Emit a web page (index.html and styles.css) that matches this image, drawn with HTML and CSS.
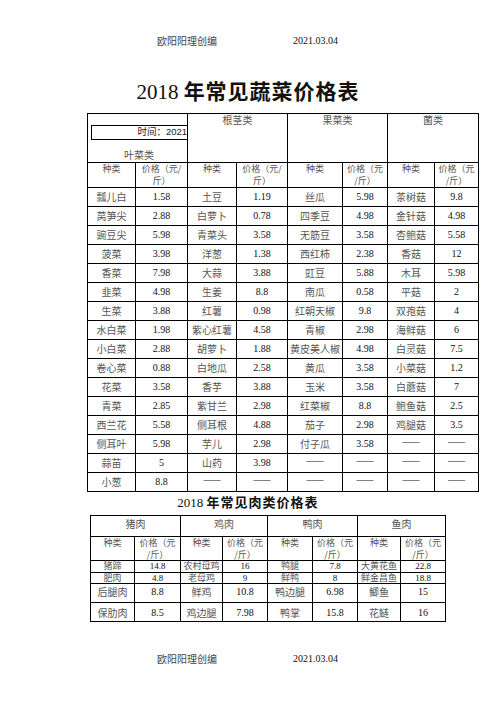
FILE: index.html
```html
<!DOCTYPE html>
<html lang="zh">
<head>
<meta charset="utf-8">
<title>2018年常见蔬菜价格表</title>
<link rel="stylesheet" href="styles.css">
</head>
<body>
<div class="page">
  <div class="runhead top"><span class="rh-cn">欧阳阳理创编</span><span>2021.03.04</span></div>

  <h1 class="title"><span class="num">2018 </span><span class="brush">年常见蔬菜价格表</span></h1>

  <table class="veg">
    <colgroup>
      <col class="c48"><col class="c52"><col class="c49"><col class="c51"><col class="c55"><col class="c45"><col class="c47"><col class="c44">
    </colgroup>
    <tr class="grp">
      <td colspan="2" class="corner-cell">
        <div class="corner">
          <div class="timebox">时间：2021</div>
          <div class="n">叶菜类</div>
        </div>
      </td>
      <td colspan="2" class="n gh">根茎类</td>
      <td colspan="2" class="n gh">果菜类</td>
      <td colspan="2" class="n gh">菌类</td>
    </tr>
    <tr class="hdr">
      <td class="n">种类</td><td class="n">价格（元/<br>斤）</td>
      <td class="n">种类</td><td class="n">价格（元/<br>斤）</td>
      <td class="n">种类</td><td class="n">价格（元<br>/斤）</td>
      <td class="n">种类</td><td class="n">价格（元<br>/斤）</td>
    </tr>
    <tr class="row"><td class="n">瓢儿白</td><td class="p">1.58</td><td class="n">土豆</td><td class="p">1.19</td><td class="n">丝瓜</td><td class="p">5.98</td><td class="n">茶树菇</td><td class="p">9.8</td></tr>
    <tr class="row"><td class="n">莴笋尖</td><td class="p">2.88</td><td class="n">白萝卜</td><td class="p">0.78</td><td class="n">四季豆</td><td class="p">4.98</td><td class="n">金针菇</td><td class="p">4.98</td></tr>
    <tr class="row"><td class="n">豌豆尖</td><td class="p">5.98</td><td class="n">青菜头</td><td class="p">3.58</td><td class="n">无筋豆</td><td class="p">3.58</td><td class="n">杏鲍菇</td><td class="p">5.58</td></tr>
    <tr class="row"><td class="n">菠菜</td><td class="p">3.98</td><td class="n">洋葱</td><td class="p">1.38</td><td class="n">西红柿</td><td class="p">2.38</td><td class="n">香菇</td><td class="p">12</td></tr>
    <tr class="row"><td class="n">香菜</td><td class="p">7.98</td><td class="n">大蒜</td><td class="p">3.88</td><td class="n">豇豆</td><td class="p">5.88</td><td class="n">木耳</td><td class="p">5.98</td></tr>
    <tr class="row"><td class="n">韭菜</td><td class="p">4.98</td><td class="n">生姜</td><td class="p">8.8</td><td class="n">南瓜</td><td class="p">0.58</td><td class="n">平菇</td><td class="p">2</td></tr>
    <tr class="row"><td class="n">生菜</td><td class="p">3.88</td><td class="n">红薯</td><td class="p">0.98</td><td class="n">红朝天椒</td><td class="p">9.8</td><td class="n">双孢菇</td><td class="p">4</td></tr>
    <tr class="row"><td class="n">水白菜</td><td class="p">1.98</td><td class="n">紫心红薯</td><td class="p">4.58</td><td class="n">青椒</td><td class="p">2.98</td><td class="n">海鲜菇</td><td class="p">6</td></tr>
    <tr class="row"><td class="n">小白菜</td><td class="p">2.88</td><td class="n">胡萝卜</td><td class="p">1.88</td><td class="n">黄皮美人椒</td><td class="p">4.98</td><td class="n">白灵菇</td><td class="p">7.5</td></tr>
    <tr class="row"><td class="n">卷心菜</td><td class="p">0.88</td><td class="n">白地瓜</td><td class="p">2.58</td><td class="n">黄瓜</td><td class="p">3.58</td><td class="n">小菜菇</td><td class="p">1.2</td></tr>
    <tr class="row"><td class="n">花菜</td><td class="p">3.58</td><td class="n">香芋</td><td class="p">3.88</td><td class="n">玉米</td><td class="p">3.58</td><td class="n">白蘑菇</td><td class="p">7</td></tr>
    <tr class="row"><td class="n">青菜</td><td class="p">2.85</td><td class="n">紫甘兰</td><td class="p">2.98</td><td class="n">红菜椒</td><td class="p">8.8</td><td class="n">鲍鱼菇</td><td class="p">2.5</td></tr>
    <tr class="row"><td class="n">西兰花</td><td class="p">5.58</td><td class="n">侧耳根</td><td class="p">4.88</td><td class="n">茄子</td><td class="p">2.98</td><td class="n">鸡腿菇</td><td class="p">3.5</td></tr>
    <tr class="row"><td class="n">侧耳叶</td><td class="p">5.98</td><td class="n">芋儿</td><td class="p">2.98</td><td class="n">付子瓜</td><td class="p">3.58</td><td class="d">——</td><td class="d">——</td></tr>
    <tr class="row"><td class="n">蒜苗</td><td class="p">5</td><td class="n">山药</td><td class="p">3.98</td><td class="d">——</td><td class="d">——</td><td class="d">——</td><td class="d">——</td></tr>
    <tr class="row"><td class="n">小葱</td><td class="p">8.8</td><td class="d">——</td><td class="d">——</td><td class="d">——</td><td class="d">——</td><td class="d">——</td><td class="d">——</td></tr>
  </table>

  <h2 class="subtitle"><span class="num">2018 </span><span class="brush">年常见肉类价格表</span></h2>

  <table class="meat">
    <colgroup>
      <col class="c44"><col class="c46"><col class="c42"><col class="c45"><col class="c45"><col class="c45"><col class="c43"><col class="c45">
    </colgroup>
    <tr class="mgrp">
      <td colspan="2" class="n">猪肉</td><td colspan="2" class="n">鸡肉</td><td colspan="2" class="n">鸭肉</td><td colspan="2" class="n">鱼肉</td>
    </tr>
    <tr class="mhdr">
      <td class="n">种类</td><td class="n">价格（元<br>/斤）</td>
      <td class="n">种类</td><td class="n">价格（元<br>/斤）</td>
      <td class="n">种类</td><td class="n">价格（元<br>/斤）</td>
      <td class="n">种类</td><td class="n">价格（元<br>/斤）</td>
    </tr>
    <tr class="m12"><td class="n">猪蹄</td><td class="p">14.8</td><td class="n">农村母鸡</td><td class="p">16</td><td class="n">鸭腿</td><td class="p">7.8</td><td class="n">大黄花鱼</td><td class="p">22.8</td></tr>
    <tr class="m11"><td class="n">肥肉</td><td class="p">4.8</td><td class="n">老母鸡</td><td class="p">9</td><td class="n">鲜鸭</td><td class="p">8</td><td class="n">鲜金昌鱼</td><td class="p">18.8</td></tr>
    <tr class="m19a"><td class="n">后腿肉</td><td class="p">8.8</td><td class="n">鲜鸡</td><td class="p">10.8</td><td class="n">鸭边腿</td><td class="p">6.98</td><td class="n">鲫鱼</td><td class="p">15</td></tr>
    <tr class="m19b"><td class="n">保肋肉</td><td class="p">8.5</td><td class="n">鸡边腿</td><td class="p">7.98</td><td class="n">鸭掌</td><td class="p">15.8</td><td class="n">花鲢</td><td class="p">16</td></tr>
  </table>

  <div class="runhead bottom"><span class="rh-cn">欧阳阳理创编</span><span>2021.03.04</span></div>
</div>
</body>
</html>
```

FILE: styles.css
```css
* { box-sizing: border-box; }

body {
  margin: 0;
  background: #fff;
  color: #111;
  font-family: "Liberation Serif", "Noto Sans CJK SC", serif;
}

.page {
  width: 496px;
  height: 702px;
  overflow: hidden;
}

.runhead {
  display: flex;
  gap: 76px;
  padding-left: 157px;
  font-size: 10px;
  line-height: 12px;
  color: #111;
}
.runhead.top { padding-top: 35px; }
.runhead.bottom { margin-top: 31px; }
.rh-cn {
  font-family: "Noto Sans CJK SC", sans-serif;
  color: #444;
}

.title {
  margin: 31px 0 0;
  text-align: center;
  font-size: 21px;
  line-height: 24px;
  font-weight: normal;
}
.subtitle {
  margin: 2px 0 0;
  text-align: center;
  font-size: 13px;
  line-height: 16px;
  font-weight: normal;
}
.num { font-family: "Liberation Serif", serif; }
.brush {
  font-family: "Noto Sans CJK SC", sans-serif;
  font-weight: 700;
  letter-spacing: 1px;
}

table {
  border-collapse: collapse;
  table-layout: fixed;
}
td {
  border: 1px solid #000;
  padding: 0;
  text-align: center;
  vertical-align: middle;
  font-size: 10px;
  line-height: 10px;
  white-space: nowrap;
  overflow: hidden;
}
.n {
  font-family: "Noto Sans CJK SC", sans-serif;
  color: #555;
}
.p {
  font-family: "Liberation Serif", serif;
  color: #111;
}
.d {
  font-family: "Liberation Serif", serif;
  font-size: 8.5px;
  color: #111;
  vertical-align: top;
  padding-top: 1px;
}

.c42 { width: 42px; }
.c43 { width: 43px; }
.c44 { width: 44px; }
.c45 { width: 45px; }
.c46 { width: 46px; }
.c47 { width: 47px; }
.c48 { width: 48px; }
.c49 { width: 49px; }
.c51 { width: 51px; }
.c52 { width: 52px; }
.c55 { width: 55px; }

.veg {
  margin: 9px 0 0 87px;
  width: 391px;
}
.veg .grp { height: 49px; }
.veg .gh {
  vertical-align: top;
  padding-top: 1px;
}
.corner-cell { vertical-align: top; }
.corner {
  height: 48px;
  display: flex;
  flex-direction: column;
  justify-content: space-between;
  padding: 11px 0 2px 3px;
}
.timebox {
  height: 15px;
  border: 1.5px solid #000;
  border-right: none;
  text-align: right;
  font-family: "Liberation Sans", "Noto Sans CJK SC", sans-serif;
  font-size: 9.5px;
  line-height: 12px;
  color: #222;
  overflow: hidden;
}
.veg .hdr { height: 25px; }
.veg .hdr td {
  vertical-align: top;
  padding-top: 0;
  font-size: 9px;
  line-height: 12px;
}
.veg .row { height: 19px; }

.meat {
  margin: 4px 0 0 90px;
  width: 355px;
}
.meat td { vertical-align: top; }
.mgrp { height: 21px; }
.mgrp td { padding-top: 3px; }
.mhdr { height: 23px; }
.mhdr td {
  padding-top: 0;
  line-height: 11.5px;
  font-size: 9px;
}
.m12 { height: 12px; }
.m11 { height: 11px; }
.m12 td, .m11 td {
  padding-top: 0;
  font-size: 9px;
  line-height: 10px;
}
.m19a { height: 19px; }
.m19a td { padding-top: 3px; }
.m19b { height: 19px; }
.m19b td { padding-top: 5px; }
```
